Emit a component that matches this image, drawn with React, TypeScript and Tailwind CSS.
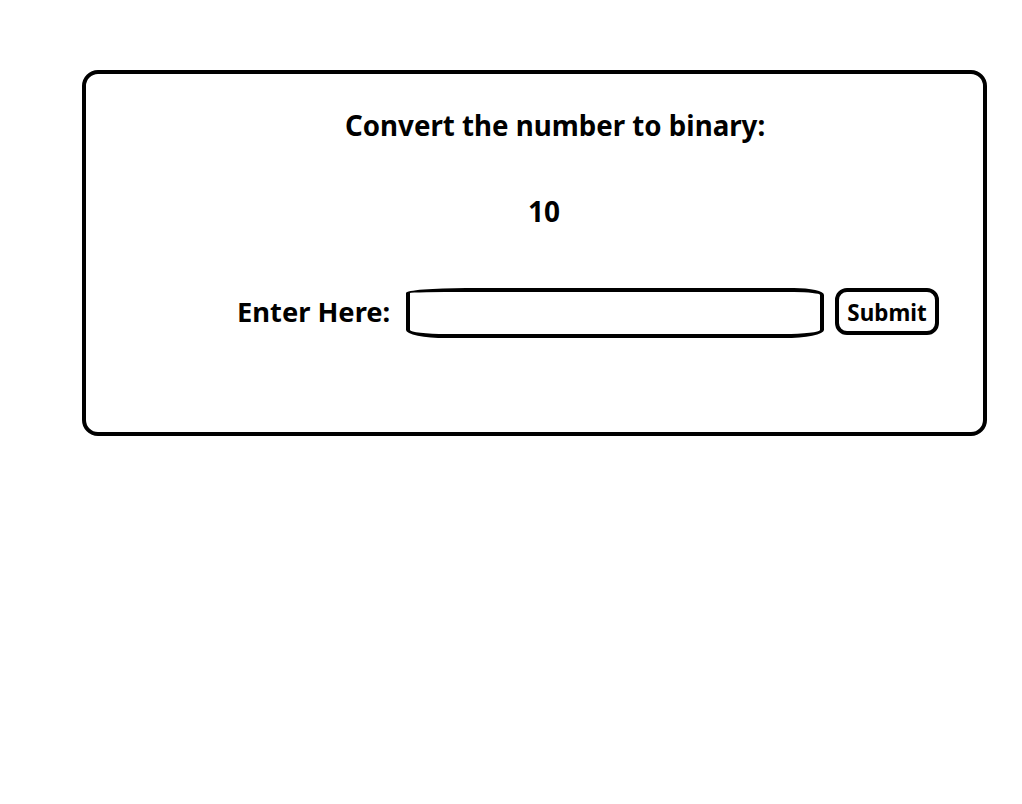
export default function App() {
  return (
    <div className="min-h-screen bg-white pt-[70px] pl-[82px] font-['Noto_Sans',sans-serif] text-black">
      <div className="flex h-[366px] w-[905px] flex-col rounded-[16px] border-4 border-black pt-[34px]">
        <h2 className="ml-[259px] text-[27.7px] font-bold leading-[34px]">
          Convert the number to binary:
        </h2>
        <p className="ml-[442px] mt-[52px] text-[28px] font-bold leading-[34px]">10</p>
        <div className="mt-[60px] flex items-start">
          <label className="ml-[151px] mt-[7px] w-[169px] text-[27.3px] font-bold leading-[34px]">
            Enter Here:
          </label>
          <input
            type="text"
            className="h-[50px] w-[418px] rounded-[60px_30px_40px_40px/5px_7px_8px_8px] border-4 border-black bg-white px-3 outline-none"
          />
          <button className="ml-[11px] h-[47px] w-[104px] rounded-[12px] border-4 border-black bg-white pt-[3px] text-[22.4px] font-bold leading-none">
            Submit
          </button>
        </div>
      </div>
    </div>
  );
}
